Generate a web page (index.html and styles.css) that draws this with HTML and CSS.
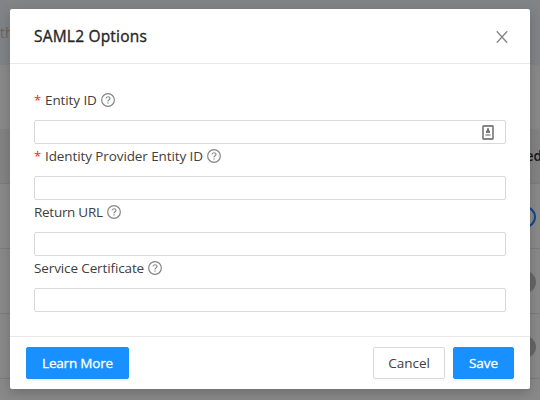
FILE: index.html
```
<!DOCTYPE html>
<html lang="en">
<head>
<meta charset="utf-8">
<title>SAML2 Options</title>
<link rel="stylesheet" href="styles.css">
</head>
<body>
<svg class="defs" aria-hidden="true">
  <symbol id="help" viewBox="0 0 14 14">
    <circle cx="7" cy="7" r="6.35" fill="none" stroke="currentColor" stroke-width="1.2"/>
    <path d="M5 5.6C5 3.1 9 3.1 9 5.5C9 6.8 7 6.8 7 8.4" fill="none" stroke="currentColor" stroke-width="1.1"/>
    <circle cx="7" cy="10" r=".7" fill="currentColor"/>
  </symbol>
</svg>
<div class="page">
  <div class="band alert"><span class="alert-text">th</span></div>
  <div class="band toolbar"></div>
  <div class="band head"><span>ed</span></div>
  <div class="band row"><i class="dot ring"></i></div>
  <div class="band row"><i class="dot"></i></div>
  <div class="band row"><i class="dot"></i></div>
  <div class="band last"></div>
</div>
<div class="modal" role="dialog">
  <header class="modal-header">
    <h1>SAML2 Options</h1>
    <svg class="close" viewBox="0 0 12 12"><path d="M.8.3L11.2 11.7M11.2.3L.8 11.7"/></svg>
  </header>
  <form class="modal-body">
    <div class="field">
      <label><span class="required">*</span><span class="t-entity">Entity ID</span><svg class="help"><use href="#help"/></svg></label>
      <div class="input">
        <svg class="autofill" viewBox="0 0 12 15"><rect x="1" y="1" width="10" height="13" rx=".5" fill="#fff" stroke="#858585" stroke-width="1.8"/><path d="M5 3.2h2v2.2h1V8H4V5.4h1z" fill="#777"/><path d="M3.5 9h5v2h-5z" fill="#aaa"/></svg>
      </div>
    </div>
    <div class="field">
      <label><span class="required">*</span><span class="t-provider">Identity Provider Entity ID</span><svg class="help"><use href="#help"/></svg></label>
      <div class="input"></div>
    </div>
    <div class="field">
      <label><span class="t-return">Return URL</span><svg class="help"><use href="#help"/></svg></label>
      <div class="input"></div>
    </div>
    <div class="field">
      <label><span class="t-cert">Service Certificate</span><svg class="help"><use href="#help"/></svg></label>
      <div class="input"></div>
    </div>
  </form>
  <footer class="modal-footer">
    <button class="btn primary learn">Learn More</button>
    <button class="btn cancel">Cancel</button>
    <button class="btn primary save">Save</button>
  </footer>
</div>
</body>
</html>
```
FILE: styles.css
```
* { box-sizing: border-box; }
body { margin: 0; width: 540px; height: 400px; overflow: hidden; font: 14px "Open Sans", "Noto Sans", sans-serif; color: #404040; }
.defs { position: absolute; width: 0; height: 0; }
.page { height: 400px; background: #898989; }
.band { display: flex; align-items: center; justify-content: flex-end; }
.alert { height: 65px; background: #818487; justify-content: flex-start; }
.alert-text { color: #70624f; }
.toolbar { height: 64px; }
.head { height: 55px; background: #838383; border-bottom: 1px solid #7c7c7c; font-size: 13.5px; font-weight: 600; color: #181818; }
.head span { margin-right: -2px; }
.row { height: 65px; border-bottom: 1px solid #7c7c7c; }
.dot { width: 22px; height: 22px; margin: 2px 4px 0 0; border-radius: 50%; background: #666; }
.ring { background: #898989; border: 2px solid #0d4b86; }
.modal { position: absolute; left: 10px; top: 9px; width: 520px; height: 380px; display: flex; flex-direction: column; background: #fff; border-radius: 2px; box-shadow: 0 4px 12px rgba(0,0,0,.2); }
.modal-header { height: 55px; display: flex; align-items: center; justify-content: space-between; padding: 0 22px 0 24px; border-bottom: 1px solid #e8e8e8; }
h1 { margin: 0; font-size: 15.5px; font-weight: 500; line-height: 22px; letter-spacing: .2px; color: #262626; -webkit-text-stroke: .35px #262626; white-space: nowrap; }
.close { width: 12px; height: 12px; margin-top: 2px; fill: none; stroke: #858585; stroke-width: 1.4; }
.modal-body { flex: 1; padding: 24px; }
.field { height: 56px; }
label { display: flex; align-items: center; height: 24px; margin-bottom: 8px; white-space: nowrap; font-size: 13.5px; }
.required { width: 11px; color: #f5222d; font-size: 13px; }
.t-entity { letter-spacing: -.1px; }
.t-provider { letter-spacing: -.1px; }
.t-return { letter-spacing: -.28px; }
.t-cert { letter-spacing: -.12px; }
.help { width: 14px; height: 14px; margin-left: 4px; color: #858585; }
.input { height: 24px; display: flex; align-items: center; justify-content: flex-end; padding-right: 11px; border: 1px solid #d9d9d9; border-radius: 2px; background: #fff; }
.autofill { width: 12px; height: 15px; }
.modal-footer { height: 53px; display: flex; align-items: flex-start; padding: 10px 16px; border-top: 1px solid #e8e8e8; }
.btn { height: 32px; padding: 0; border: 1px solid #d9d9d9; border-radius: 2px; background: #fff; font: 13.5px "Open Sans", sans-serif; color: #404040; box-shadow: 0 2px 0 rgba(0,0,0,.016); }
.primary { border-color: #1890ff; background: #1890ff; color: #fff; -webkit-text-stroke: .3px #fff; box-shadow: 0 2px 0 rgba(0,0,0,.043); }
.learn { width: 103px; margin-right: auto; letter-spacing: -.2px; }
.cancel { width: 72px; margin-right: 8px; }
.save { width: 61px; }
```
